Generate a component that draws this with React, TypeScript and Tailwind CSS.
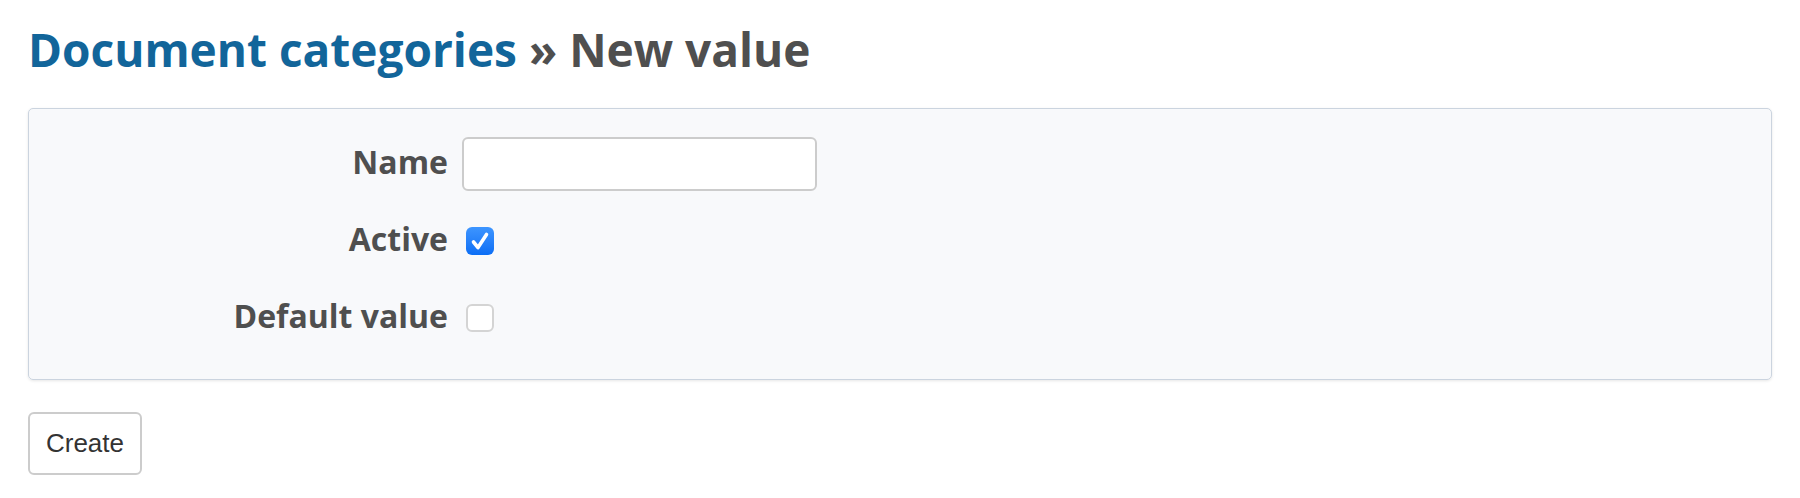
import {useState} from "react";

const LABEL_CLASS =
  "w-[419px] shrink-0 pb-[4px] text-right text-[32px] font-bold text-[#4f4f4f]";

const CHECKED_BOX =
  "ml-[4px] flex h-[28px] w-[28px] items-center justify-center rounded-[6px] bg-gradient-to-b from-[#3d95ff] to-[#0a6ef5]";
const UNCHECKED_BOX =
  "ml-[4px] flex h-[28px] w-[28px] items-center justify-center rounded-[6px] border-2 border-[#d4d4d4] bg-white";

function CheckMark() {
  return (
    <svg viewBox="0 0 28 28" className="h-[28px] w-[28px]">
      <path
        d="M7.5 15 L12 20.5 L20.5 7.5"
        fill="none"
        stroke="white"
        strokeWidth="3.6"
        strokeLinecap="round"
        strokeLinejoin="round"
      />
    </svg>
  );
}

export default function App() {
  const [name, setName] = useState("");
  const [active, setActive] = useState(true);
  const [isDefault, setIsDefault] = useState(false);

  return (
    <main className="min-h-screen bg-white px-[28px] pt-[22px] font-['Open_Sans',sans-serif]">
      <h1 className="text-[46px] font-bold leading-[1.2] text-[#4f4f4f]">
        <a href="#" className="text-[#12659a]">
          Document categories
        </a>{" "}
        » New value
      </h1>

      <form className="mt-[31px]">
        <fieldset className="flex flex-col gap-[23px] rounded-[5px] border border-[#cbd4df] bg-[#f8f9fb] pb-[34px] pt-[28px] shadow-[0_1px_3px_rgba(0,0,0,0.1)]">
          <div className="flex h-[54px] items-center gap-[14px]">
            <label className={LABEL_CLASS}>Name</label>
            <input
              value={name}
              onChange={(event) => setName(event.target.value)}
              className="h-[54px] w-[355px] rounded-[6px] border-2 border-[#cccccc] bg-white px-3 text-[26px] outline-none"
            />
          </div>

          <div className="flex h-[54px] items-center gap-[14px]">
            <label className={LABEL_CLASS}>Active</label>
            <button
              type="button"
              onClick={() => setActive(!active)}
              className={active ? CHECKED_BOX : UNCHECKED_BOX}
            >
              {active ? <CheckMark /> : null}
            </button>
          </div>

          <div className="flex h-[54px] items-center gap-[14px]">
            <label className={LABEL_CLASS}>Default value</label>
            <button
              type="button"
              onClick={() => setIsDefault(!isDefault)}
              className={isDefault ? CHECKED_BOX : UNCHECKED_BOX}
            >
              {isDefault ? <CheckMark /> : null}
            </button>
          </div>
        </fieldset>

        <button
          type="submit"
          className="mt-[32px] h-[63px] w-[114px] rounded-[6px] border-2 border-[#cccccc] bg-white font-['Liberation_Sans',sans-serif] text-[26px] text-[#333333]"
        >
          Create
        </button>
      </form>
    </main>
  );
}
